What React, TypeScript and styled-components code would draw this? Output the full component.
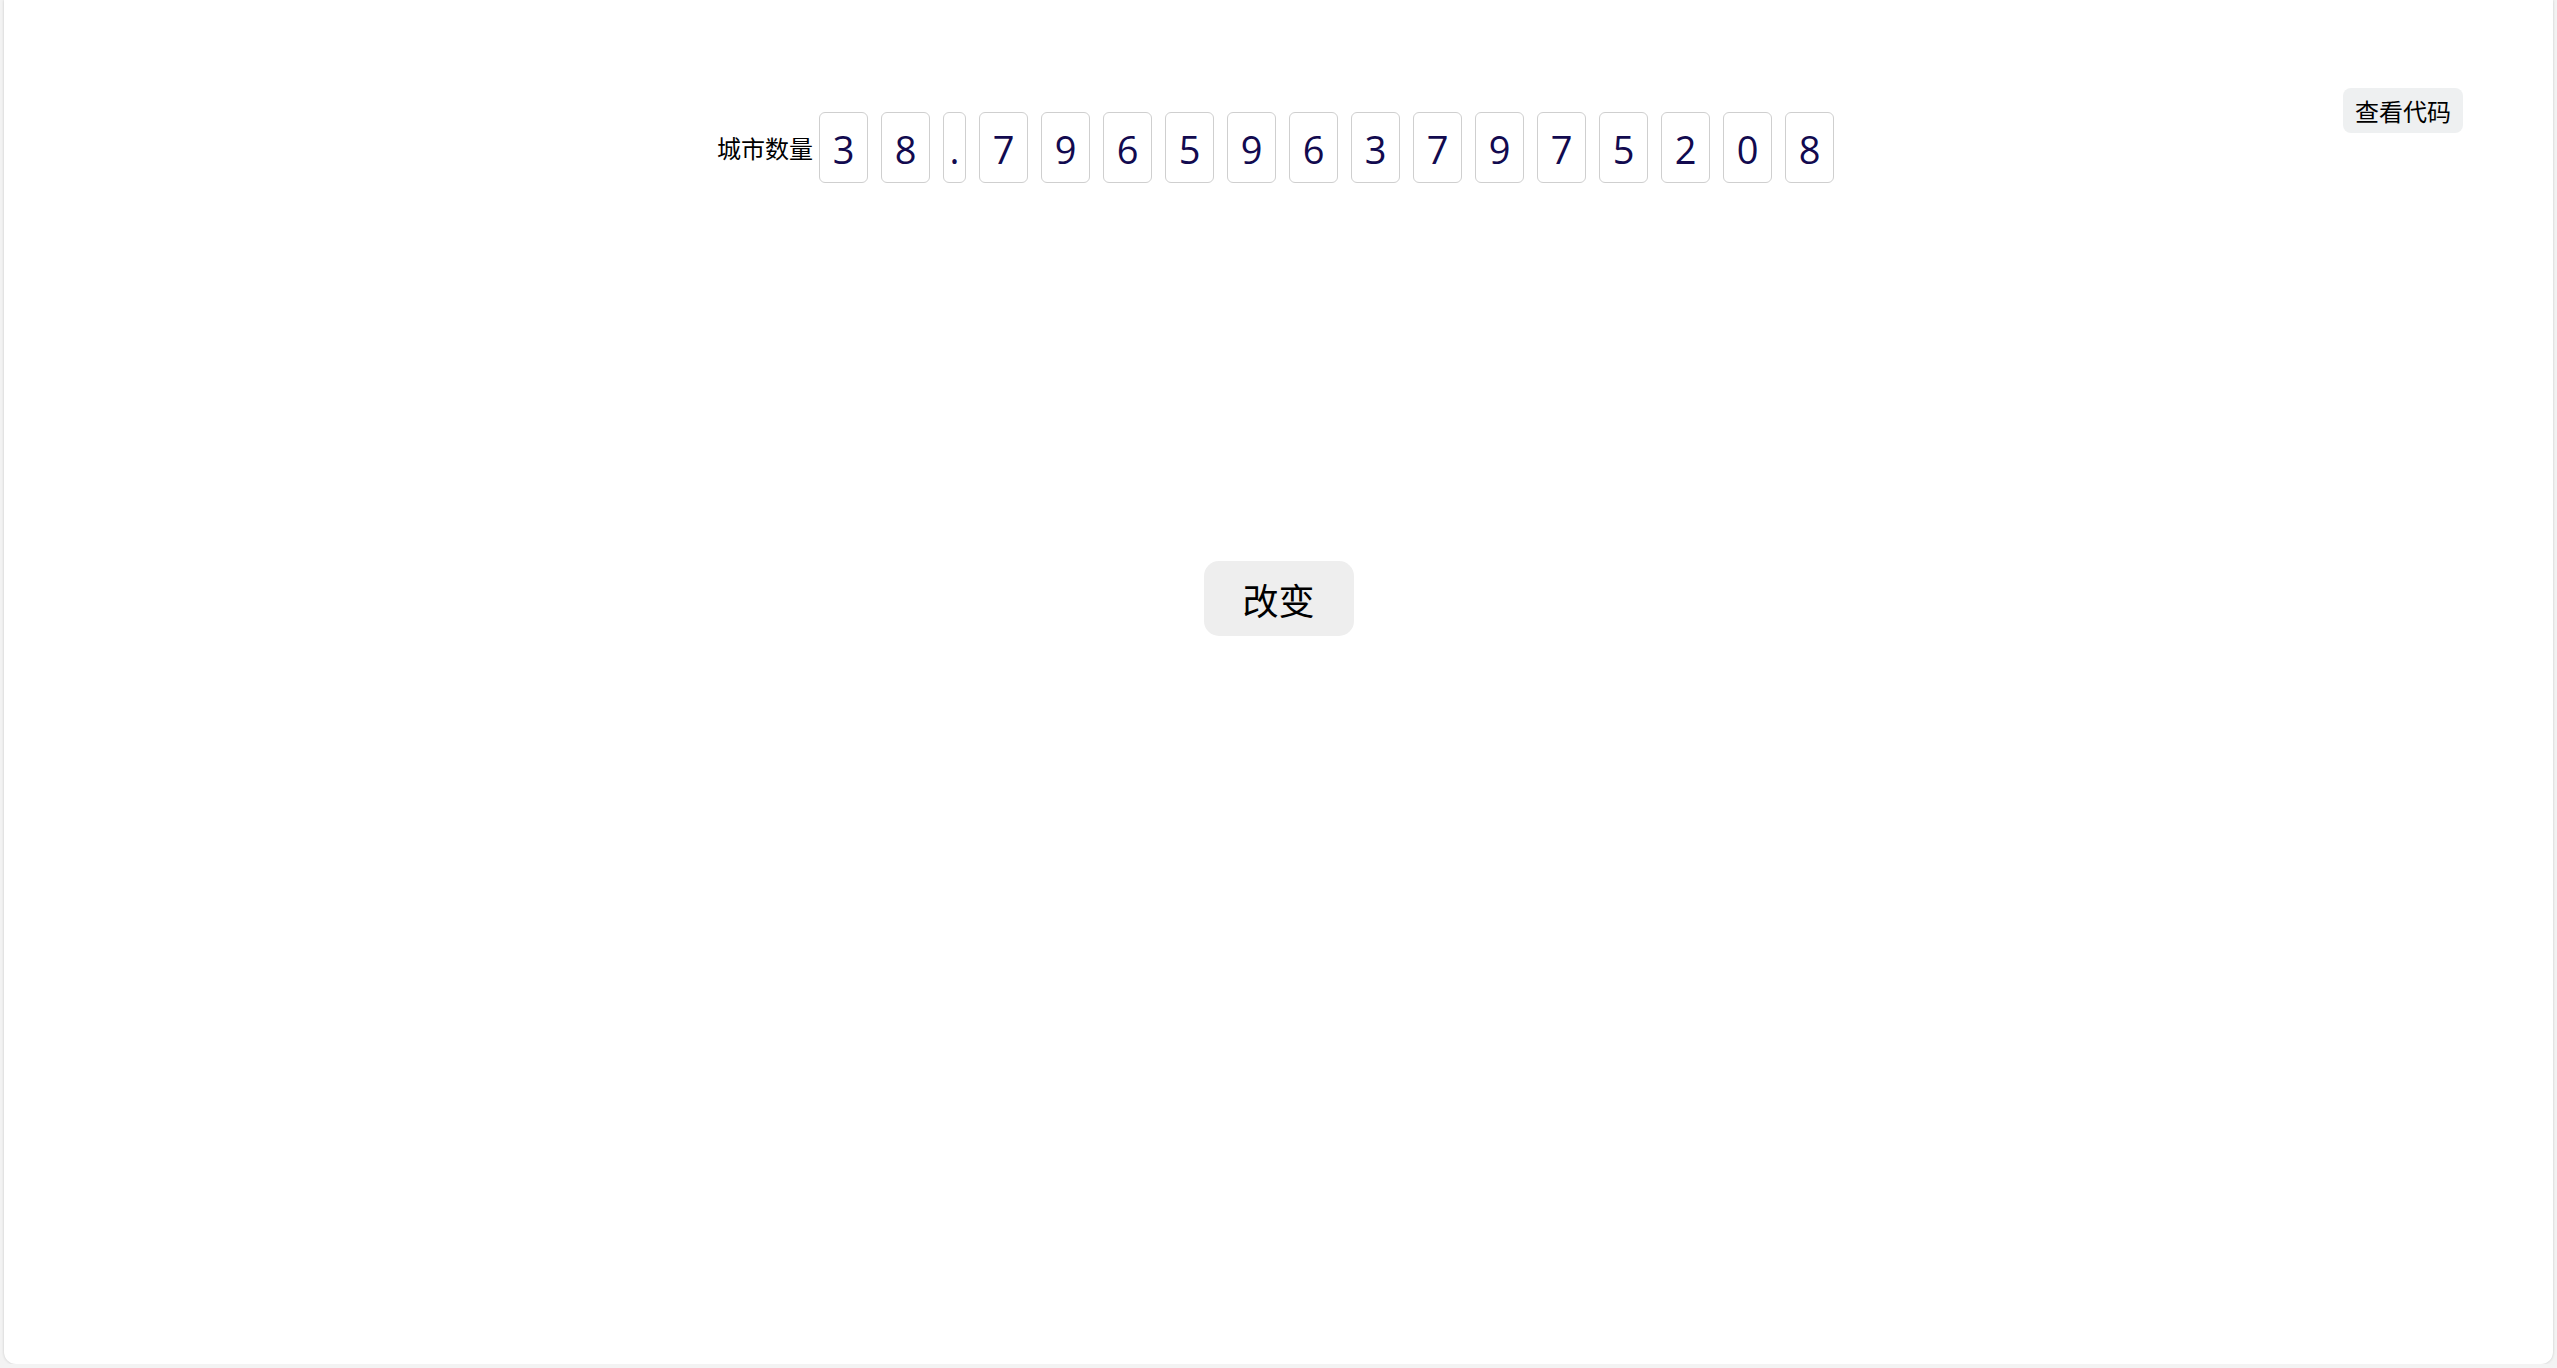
import React from "react";
import styled, { createGlobalStyle } from "styled-components";

const Global = createGlobalStyle`
  html, body { margin: 0; padding: 0; background: #f3f3f3; }
  body { font-family: "Noto Sans CJK SC", "Noto Sans", sans-serif; }
`;

const Card = styled.div`
  position: relative;
  box-sizing: border-box;
  margin: 0 4px 0 4px;
  height: 1364px;
  background: #ffffff;
  border-radius: 0 0 12px 12px;
  box-shadow: 0 0 3px rgba(0, 0, 0, 0.18);
  display: flex;
  flex-direction: column;
  align-items: center;
  padding-top: 112px;
`;

const CodeButton = styled.button`
  position: absolute;
  top: 88px;
  right: 90px;
  width: 120px;
  height: 45px;
  border: none;
  border-radius: 8px;
  background: #eef0f1;
  color: #000;
  font-family: "Noto Sans CJK SC", sans-serif;
  font-size: 24px;
  padding: 0;
  cursor: pointer;
`;

const Row = styled.div`
  display: flex;
  align-items: center;
  gap: 13px;
  transform: translateX(-3px);
`;

const Label = styled.span`
  font-size: 24px;
  color: #000;
  margin-right: -7px;
  font-family: "Noto Sans CJK SC", sans-serif;
`;

const Cell = styled.div<{ $narrow?: boolean }>`
  box-sizing: border-box;
  width: ${(p) => (p.$narrow ? "23px" : "49px")};
  height: 71px;
  border: 1px solid #cfcfcf;
  border-radius: 6px;
  display: flex;
  align-items: center;
  justify-content: center;
  font-family: "Open Sans", "Noto Sans", sans-serif;
  font-size: 38px;
  color: #120a4f;
  padding-top: 2px;
`;

const ChangeButton = styled.button`
  margin-top: 378px;
  width: 150px;
  height: 75px;
  border: none;
  border-radius: 15px;
  background: #eeeeee;
  color: #000;
  font-family: "Noto Sans CJK SC", sans-serif;
  font-size: 36px;
  padding: 0;
  cursor: pointer;
`;

const value = "38.79659637975208";

export default function App() {
  return (
    <>
      <Global />
      <Card>
        <CodeButton>查看代码</CodeButton>
        <Row>
          <Label>城市数量</Label>
          {value.split("").map((ch, i) => (
            <Cell key={i} $narrow={ch === "."}>
              {ch}
            </Cell>
          ))}
        </Row>
        <ChangeButton>改变</ChangeButton>
      </Card>
    </>
  );
}
